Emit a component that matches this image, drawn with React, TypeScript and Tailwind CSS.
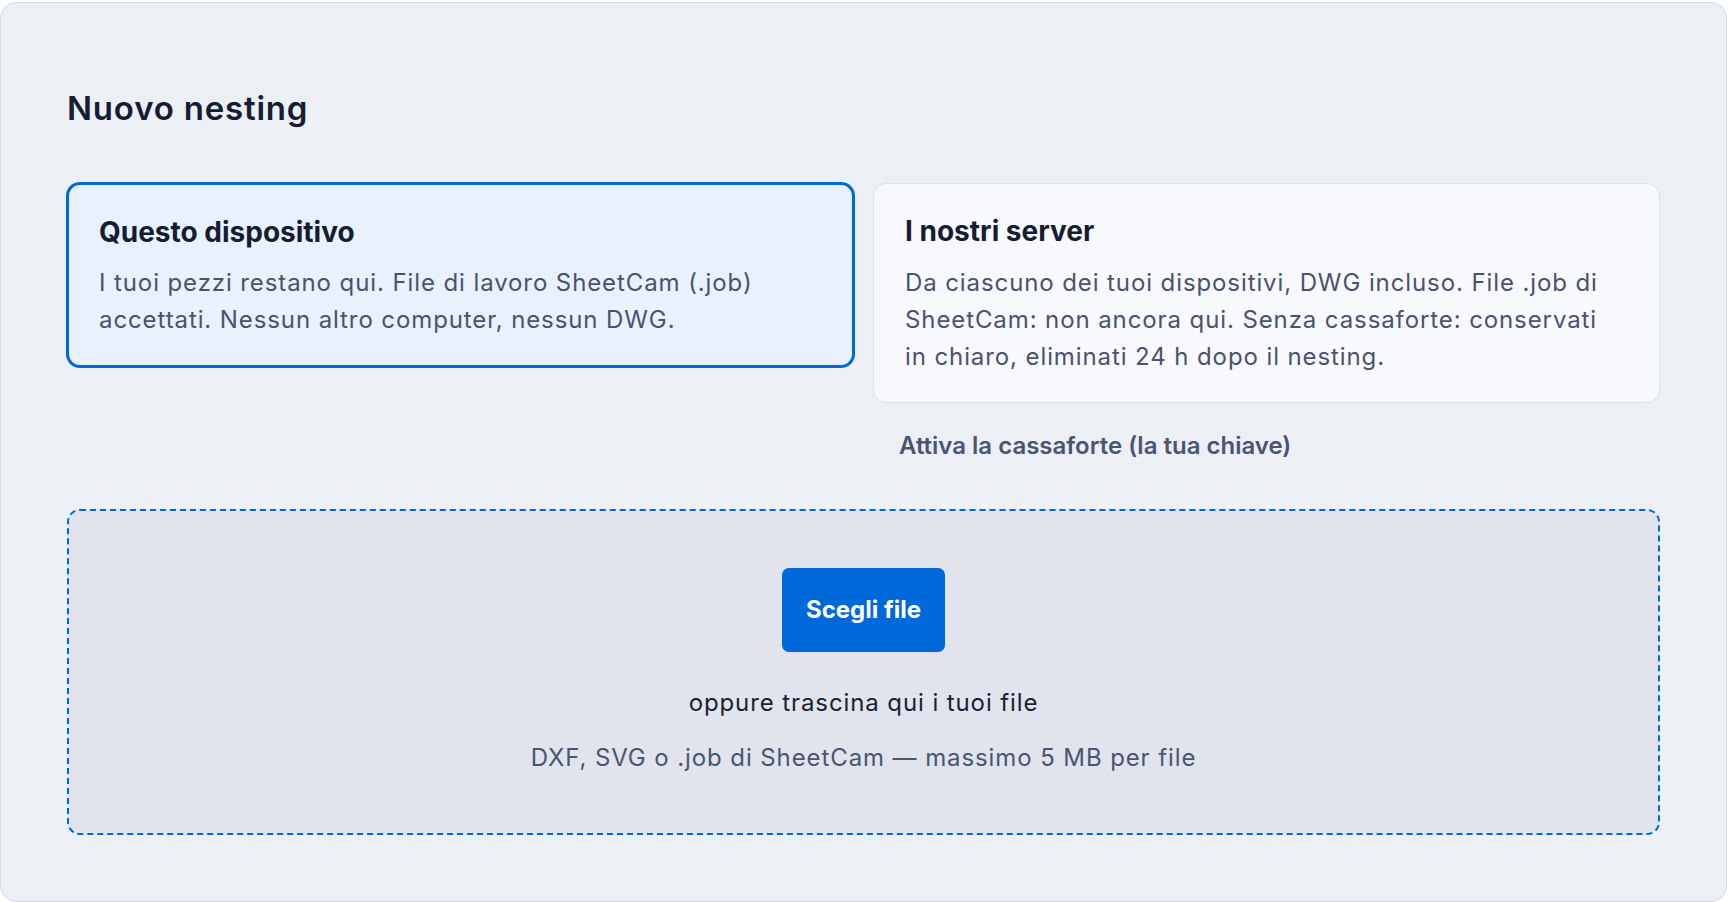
import { useState } from "react";

type Target = "device" | "server";

export default function App() {
  const [target, setTarget] = useState<Target>("device");

  const cardBase =
    "text-left rounded-[13px] pt-[27px] pb-[27px] pl-[30px] pr-[40px] transition";
  const cardOn = "bg-[#e8f1fc] border-2 border-[#0069d9] ring-1 ring-[#0069d9]";
  const cardOff = "bg-[#f7f9fd] border border-[#dde2ea] pl-[31px]";

  return (
    <div className="min-h-screen bg-white font-['Inter',sans-serif]">
      <section className="mt-[2px] w-[1727px] rounded-[16px] border border-[#d6dbe3] bg-[#eceff4] px-[66px] pt-[86px] pb-[66px]">
        {/* Titolo */}
        <h1 className="mb-[56px] text-[33px] leading-[38px] font-semibold tracking-[0.8px] text-[#161d33]">
          Nuovo nesting
        </h1>

        {/* Dove lavorare: dispositivo o server */}
        <div className="grid grid-cols-2 items-start gap-x-[19px]">
          <button
            onClick={() => setTarget("device")}
            className={`${cardBase} ${target === "device" ? cardOn : cardOff}`}
          >
            <h3 className="mb-[11px] text-[28px] leading-[41px] font-bold text-[#161d33]">
              Questo dispositivo
            </h3>
            <p className="text-[24px] leading-[37px] tracking-[0.9px] text-[#4a5270]">
              I tuoi pezzi restano qui. File di lavoro SheetCam (.job) accettati. Nessun altro
              computer, nessun DWG.
            </p>
          </button>

          <button
            onClick={() => setTarget("server")}
            className={`${cardBase} ${target === "server" ? cardOn : cardOff}`}
          >
            <h3 className="mb-[12px] text-[28px] leading-[41px] font-bold text-[#161d33]">
              I nostri server
            </h3>
            <p className="text-[24px] leading-[37px] tracking-[0.9px] text-[#4a5270]">
              Da ciascuno dei tuoi dispositivi, DWG incluso. File .job di SheetCam: non ancora
              qui. Senza cassaforte: conservati in chiaro, eliminati 24 h dopo il nesting.
            </p>
          </button>

          <div />
          <div className="mt-[25px] pl-[26px]">
            <button className="text-[24px] leading-[1.5] font-semibold text-[#4a5573] hover:text-[#161d33]">
              Attiva la cassaforte (la tua chiave)
            </button>
          </div>
        </div>

        {/* Area di caricamento */}
        <div className="mt-[45px] flex flex-col items-center rounded-[13px] border-2 border-dashed border-[#0069d9] bg-[#e1e4ec] pt-[57px] pb-[57px]">
          <button className="rounded-[7px] bg-[#0069d9] px-6 py-6 text-[24px] leading-[1.5] font-bold text-white hover:bg-[#005bbd]">
            Scegli file
          </button>
          <p className="mt-[33px] text-[24px] leading-[1.5] tracking-[0.9px] text-[#1a2035]">
            oppure trascina qui i tuoi file
          </p>
          <p className="mt-[19px] text-[24px] leading-[1.5] tracking-[0.9px] text-[#4a5573]">
            DXF, SVG o .job di SheetCam — massimo 5 MB per file
          </p>
        </div>
      </section>
    </div>
  );
}
